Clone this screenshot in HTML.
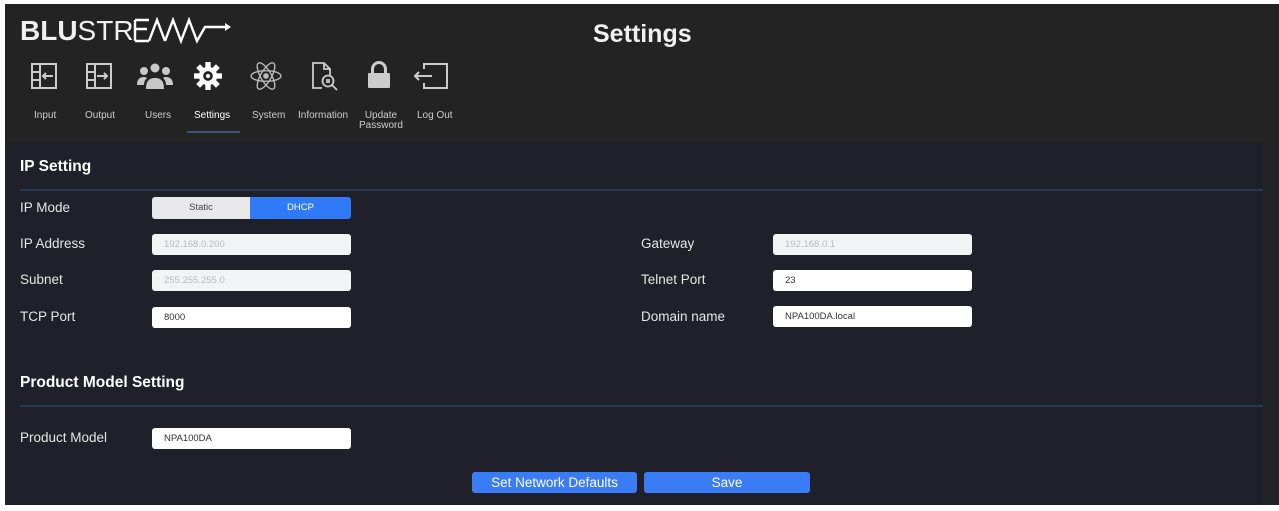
<!DOCTYPE html>
<html><head><meta charset="utf-8"><style>
*{box-sizing:border-box;margin:0;padding:0}
body{width:1279px;height:511px;background:#fff;position:relative;overflow:hidden;font-family:"Liberation Sans",sans-serif}
.hdr{position:absolute;left:5px;top:4px;width:1274px;height:139px;background:#232323}
.main{position:absolute;left:5px;top:143px;width:1258px;height:362px;background:#1f2029}
.sb{position:absolute;left:1263px;top:143px;width:16px;height:362px;background:#222326}
.t{position:absolute;color:#f0f0f0;white-space:nowrap}
.lbl{position:absolute;color:#e6e6e6;font-size:13.5px;font-family:"Liberation Sans",sans-serif}
.h{position:absolute;color:#fff;font-weight:bold;font-size:15.5px;font-family:"Liberation Sans",sans-serif}
.ln{position:absolute;left:20px;width:1243px;height:2px;background:#263a52}
.in{position:absolute;width:199px;height:21px;background:#fff;border-radius:3px;font-size:9.5px;color:#333;padding:5px 0 0 12px}
.in.d{background:#f2f3f5;color:#bbb}
.btn{position:absolute;height:21px;background:#3a7cf5;border-radius:3px;color:#fff;font-size:13.5px;text-align:center;line-height:21px}
.nl{position:absolute;top:111px;color:#ccc;font-size:10px;font-family:"Liberation Sans",sans-serif;text-align:center;line-height:10px}
svg{position:absolute}
</style></head><body>
<div class="hdr"></div><div class="main"></div><div class="sb"></div>
<div class="t" style="left:20px;top:15px;font-size:28px;font-family:'Liberation Sans',sans-serif"><b>BLU</b>STR</div>
<svg style="left:133px;top:17px" width="110" height="28" viewBox="0 0 110 28" fill="none" stroke="#fff" stroke-width="2.4"><path d="M2 3h14M2 12h12M2 24h14M2 3v21"/><path d="M16 24 L24 3 L32 24"/><path d="M32 24 L40 3 L48 24 L56 3 L64 24 L72 10 h20"/><path d="M92 6 l6 4 -6 4z" fill="#fff" stroke="none"/></svg>
<div class="t" style="left:593px;top:20px;font-size:25px;font-weight:bold">Settings</div>
<svg style="left:31px;top:63px" width="26" height="26" fill="none" stroke="#ccc" stroke-width="2"><rect x="1" y="1" width="24" height="24"/><path d="M9 1v24M1 9h8M1 17h8M22 13h-10M15 10l-3 3 3 3"/></svg>
<svg style="left:86px;top:63px" width="26" height="26" fill="none" stroke="#ccc" stroke-width="2"><rect x="1" y="1" width="24" height="24"/><path d="M9 1v24M1 9h8M1 17h8M11 13h10M18 10l3 3-3 3"/></svg>
<svg style="left:137px;top:63px" width="36" height="26" fill="#c8c8c8"><circle cx="18" cy="5" r="4.5"/><circle cx="7" cy="8" r="4"/><circle cx="29" cy="8" r="4"/><path d="M9 26c0-8 3-11 9-11s9 3 9 11z"/><path d="M0 22c0-6 3-8 7-8 2 0 3 1 3 1-2 2-3 4-3 7z"/><path d="M36 22c0-6-3-8-7-8-2 0-3 1-3 1 2 2 3 4 3 7z"/></svg>
<svg style="left:194px;top:62px" width="28" height="28" viewBox="0 0 26 26"><g fill="#fff"><circle cx="13" cy="13" r="8.5"/><g id="tt"><rect x="10.5" y="0" width="5" height="6"/></g><use href="#tt" transform="rotate(45 13 13)"/><use href="#tt" transform="rotate(90 13 13)"/><use href="#tt" transform="rotate(135 13 13)"/><use href="#tt" transform="rotate(180 13 13)"/><use href="#tt" transform="rotate(225 13 13)"/><use href="#tt" transform="rotate(270 13 13)"/><use href="#tt" transform="rotate(315 13 13)"/></g><circle cx="13" cy="13" r="4.5" fill="#232323"/><circle cx="13" cy="13" r="2" fill="#fff"/></svg>
<svg style="left:250px;top:60px" width="32" height="32" viewBox="0 0 30 30" fill="none" stroke="#bbb" stroke-width="1.3"><ellipse cx="15" cy="15" rx="14" ry="5"/><ellipse cx="15" cy="15" rx="14" ry="5" transform="rotate(60 15 15)"/><ellipse cx="15" cy="15" rx="14" ry="5" transform="rotate(120 15 15)"/><circle cx="15" cy="15" r="2" fill="#bbb"/></svg>
<svg style="left:311px;top:62px" width="32" height="30" fill="none" stroke="#ccc" stroke-width="1.8"><path d="M11 26H2V1h11l6 6v6M13 1v6h6"/><circle cx="17" cy="19" r="5.5"/><path d="M15 18h4M15 20h4M21 23l5 5"/></svg>
<svg style="left:367px;top:61px" width="24" height="28" fill="#ccc"><path d="M4 12V8a8 8 0 0 1 16 0v4h-3V8a5 5 0 0 0-10 0v4z"/><rect x="1" y="12" width="22" height="15" rx="1"/></svg>
<svg style="left:412px;top:63px" width="36" height="26" fill="none" stroke="#ccc" stroke-width="2"><path d="M12 6V1h23v24H12v-5M20 13H3M7 9l-4 4 4 4"/></svg>
<div class="nl" style="left:34px">Input</div>
<div class="nl" style="left:85px">Output</div>
<div class="nl" style="left:145px">Users</div>
<div class="nl" style="left:194px;color:#fff">Settings</div>
<div class="nl" style="left:252px">System</div>
<div class="nl" style="left:298px">Information</div>
<div class="nl" style="left:359px">Update<br>Password</div>
<div class="nl" style="left:417px">Log Out</div>
<div style="position:absolute;left:187px;top:131px;width:53px;height:2px;background:#3a5576"></div>
<div class="h" style="left:20px;top:158px">IP Setting</div>
<div class="ln" style="top:189px"></div>
<div class="lbl" style="left:20px;top:200px">IP Mode</div>
<div style="position:absolute;left:152px;top:197px;width:98px;height:22px;background:#e8e8e8;border-radius:3px 0 0 3px;font-size:9.5px;color:#444;text-align:center;line-height:22px">Static</div>
<div style="position:absolute;left:250px;top:197px;width:101px;height:22px;background:#2f7bf7;border-radius:0 3px 3px 0;font-size:9.5px;color:#fff;text-align:center;line-height:22px">DHCP</div>
<div class="lbl" style="left:20px;top:236px">IP Address</div>
<div class="in d" style="left:152px;top:234px">192.168.0.200</div>
<div class="lbl" style="left:20px;top:272px">Subnet</div>
<div class="in d" style="left:152px;top:270px">255.255.255.0</div>
<div class="lbl" style="left:20px;top:309px">TCP Port</div>
<div class="in" style="left:152px;top:307px">8000</div>
<div class="lbl" style="left:641px;top:236px">Gateway</div>
<div class="in d" style="left:773px;top:234px">192.168.0.1</div>
<div class="lbl" style="left:641px;top:272px">Telnet Port</div>
<div class="in" style="left:773px;top:270px">23</div>
<div class="lbl" style="left:641px;top:309px">Domain name</div>
<div class="in" style="left:773px;top:306px">NPA100DA.local</div>
<div class="h" style="left:20px;top:374px">Product Model Setting</div>
<div class="ln" style="top:405px"></div>
<div class="lbl" style="left:20px;top:430px">Product Model</div>
<div class="in" style="left:152px;top:428px">NPA100DA</div>
<div class="btn" style="left:472px;top:472px;width:165px">Set Network Defaults</div>
<div class="btn" style="left:644px;top:472px;width:166px">Save</div>
</body></html>
